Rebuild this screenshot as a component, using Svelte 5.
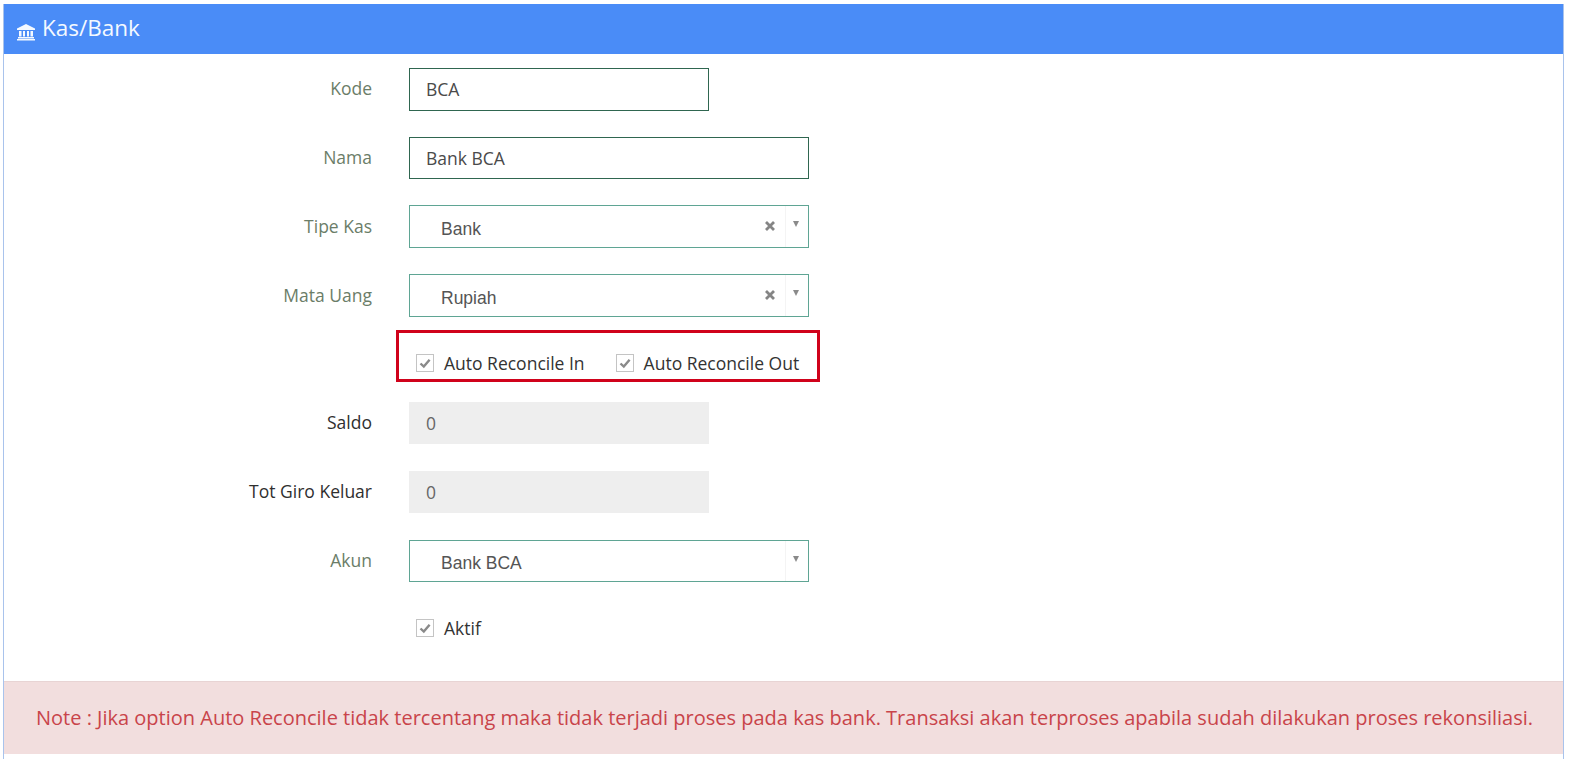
<script>
  const selects = {
    tipe: { label: "Tipe Kas", value: "Bank", clear: true },
    uang: { label: "Mata Uang", value: "Rupiah", clear: true },
    akun: { label: "Akun", value: "Bank BCA", clear: false },
  };
</script>

{#snippet check(text)}
  <label class="check">
    <span class="box">
      <svg viewBox="0 0 18 18" width="18" height="18">
        <path d="M4.5 9.5 L7.8 12.6 L13.6 5.8" fill="none" stroke="#8a8a8a" stroke-width="2.4" />
      </svg>
    </span>
    {text}
  </label>
{/snippet}

{#snippet select(item)}
  <div class="row">
    <span class="label sel">{item.label}</span>
    <div class="field wide select">
      <span class="value">{item.value}</span>
      {#if item.clear}
        <svg class="clear" viewBox="0 0 10 10" width="10" height="10">
          <path d="M1 1 L9 9 M9 1 L1 9" stroke="#858585" stroke-width="2.8" />
        </svg>
      {/if}
      <span class="caret"><span class="arrow"></span></span>
    </div>
  </div>
{/snippet}

<div class="panel">
  <header>
    <svg class="bank" viewBox="0 0 20 18" width="20" height="18">
      <path d="M10 1 L19 5.5 V7 H1 V5.5 Z" fill="#f4f9ff" />
      <path d="M3 8 H5.5 V13.5 H3 Z M7 8 H9 V13.5 H7 Z M11 8 H13 V13.5 H11 Z M14.5 8 H17 V13.5 H14.5 Z" fill="#f4f9ff" />
      <path d="M2 14 H18 V15.5 H2 Z M1 16 H19 V17.5 H1 Z" fill="#f4f9ff" />
    </svg>
    <h1>Kas/Bank</h1>
  </header>

  <form>
    <div class="row">
      <span class="label">Kode</span>
      <div class="field short dark">BCA</div>
    </div>
    <div class="row">
      <span class="label">Nama</span>
      <div class="field wide dark">Bank BCA</div>
    </div>
    {@render select(selects.tipe)}
    {@render select(selects.uang)}

    <div class="checks-row">
      <div class="highlight">
        {@render check("Auto Reconcile In")}
        {@render check("Auto Reconcile Out")}
      </div>
    </div>

    <div class="row tall">
      <span class="label strong">Saldo</span>
      <div class="field short readonly">0</div>
    </div>
    <div class="row tall">
      <span class="label strong">Tot Giro Keluar</span>
      <div class="field short readonly">0</div>
    </div>
    {@render select(selects.akun)}

    <div class="aktif-row">
      {@render check("Aktif")}
    </div>
  </form>

  <div class="note">
    Note : Jika option Auto Reconcile tidak tercentang maka tidak terjadi proses pada kas bank. Transaksi akan terproses apabila sudah dilakukan proses rekonsiliasi.
  </div>
</div>

<style>
  :global(body) {
    background: #fff;
    font-family: "Open Sans", sans-serif;
  }

  .panel {
    box-sizing: border-box;
    width: 1561px;
    height: 755px;
    margin: 4px 0 0 3px;
    border-left: 1px solid #a9c3ec;
    border-right: 1px solid #a9c3ec;
    overflow: hidden;
    font-family: "Open Sans", sans-serif;
  }

  header {
    display: flex;
    align-items: center;
    gap: 6px;
    height: 50px;
    margin: 0 -1px;
    padding-left: 13px;
    background: #4a8cf7;
    color: #f4f9ff;
  }

  .bank {
    margin-top: 5px;
  }

  h1 {
    margin: 0 0 3px;
    font-size: 22.5px;
    font-weight: 400;
  }

  form {
    display: flex;
    flex-direction: column;
    padding-top: 14px;
  }

  .row {
    display: flex;
    align-items: flex-start;
    height: 68.7px;
  }

  .row.tall {
    height: 69px;
  }

  .label {
    box-sizing: border-box;
    width: 368px;
    padding-top: 9px;
    margin-right: 37px;
    text-align: right;
    font-size: 17.5px;
    line-height: 22px;
    color: #6b7d68;
  }

  .label.sel {
    padding-top: 9.6px;
  }

  .label.strong {
    color: #2f2f2f;
  }

  .field {
    box-sizing: border-box;
    height: 42.5px;
    padding: 0 16px;
    font-size: 17.5px;
    line-height: 41px;
    color: #4a4a4a;
    border: 1px solid transparent;
  }

  .short {
    width: 300px;
  }

  .wide {
    width: 400px;
  }

  .dark {
    border-color: #2f6650;
  }

  .readonly {
    background: #eeeeee;
    color: #666;
  }

  .select {
    display: flex;
    position: relative;
    padding-left: 31px;
    border-color: #5fa594;
  }

  .value {
    padding-top: 2.5px;
    font-family: "Liberation Sans", sans-serif;
    font-size: 17.5px;
    color: #555;
  }

  .clear {
    position: absolute;
    right: 33px;
    top: 15px;
  }

  .caret {
    position: absolute;
    right: 0;
    top: 0;
    bottom: 0;
    width: 22px;
    border-left: 1px solid #f4f4f4;
  }

  .arrow {
    position: absolute;
    left: 7px;
    top: 15px;
    border-left: 3.5px solid transparent;
    border-right: 3.5px solid transparent;
    border-top: 6px solid #8a8a8a;
  }

  .checks-row {
    height: 58px;
    margin: -12.5px 0 13.5px;
    padding-left: 392px;
  }

  .highlight {
    box-sizing: border-box;
    display: flex;
    align-items: flex-end;
    gap: 31px;
    width: 424px;
    height: 52px;
    padding: 0 0 4px 17px;
    border: 3px solid #d0021b;
  }

  .check {
    display: flex;
    align-items: center;
    gap: 10px;
    height: 24px;
    font-size: 17.5px;
    color: #333;
  }

  .box {
    box-sizing: border-box;
    display: flex;
    width: 18px;
    height: 18px;
    border: 1px solid #c4c4c4;
    background: #fff;
  }

  .box svg {
    flex: none;
    margin: -1px;
  }

  .aktif-row {
    height: 42px;
    margin-top: 7.5px;
    padding-left: 412px;
  }

  .note {
    display: flex;
    align-items: center;
    height: 73px;
    margin-top: 23px;
    padding-left: 32px;
    background: #f2dede;
    border-top: 1px solid #e8d4d4;
    box-sizing: border-box;
    white-space: nowrap;
    font-size: 20px;
    color: #c9444a;
  }
</style>
